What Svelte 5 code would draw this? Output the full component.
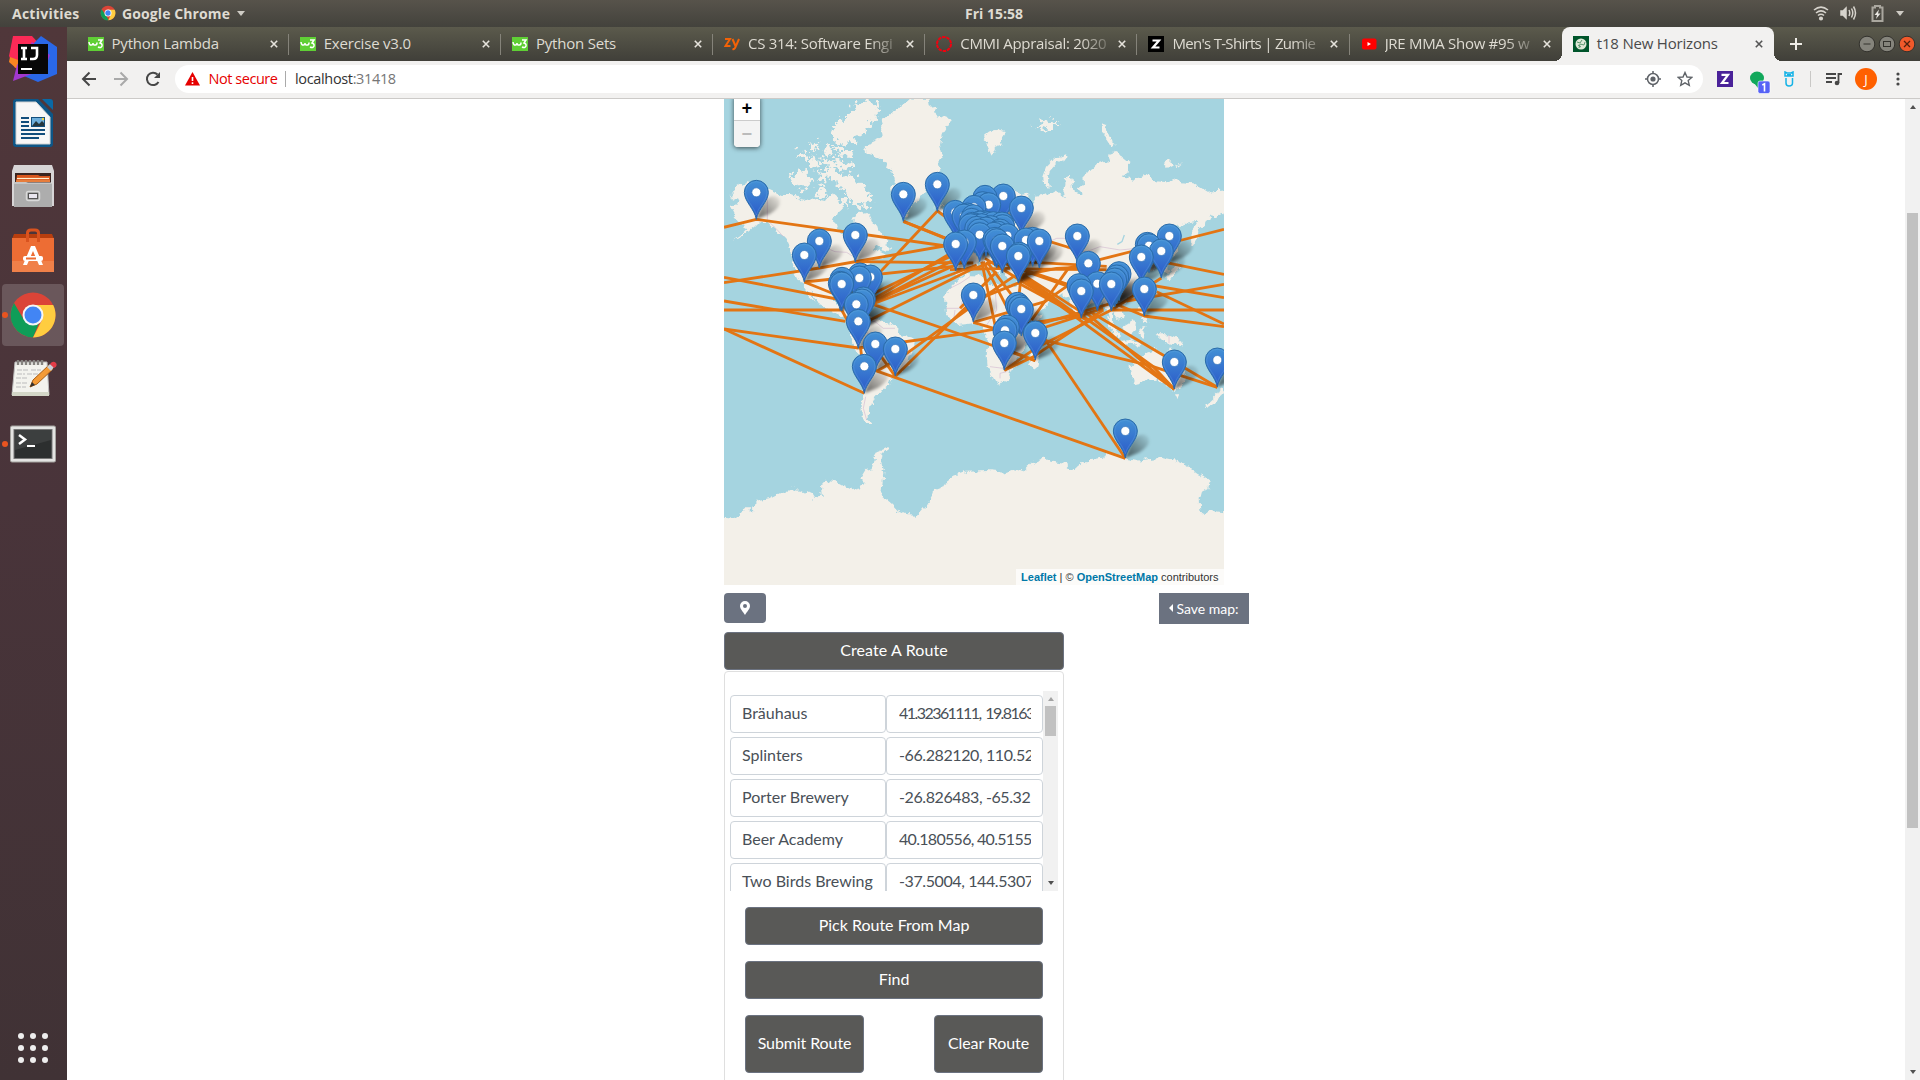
<script>
  const tabs = [
    { icon: 'w3', title: 'Python Lambda' },
    { icon: 'w3', title: 'Exercise v3.0' },
    { icon: 'w3', title: 'Python Sets' },
    { icon: 'zy', title: 'CS 314: Software Engi' },
    { icon: 'ring', title: 'CMMI Appraisal: 2020' },
    { icon: 'zum', title: "Men's T-Shirts | Zumie", tight: true },
    { icon: 'yt', title: 'JRE MMA Show #95 w' },
    { icon: 't18', title: 't18 New Horizons', active: true }
  ];

  const places = [
    ['Bräuhaus', '41.32361111, 19.8163', 'ones'],
    ['Splinters', '-66.282120, 110.52', 'mid'],
    ['Porter Brewery', '-26.826483, -65.32', 'mid'],
    ['Beer Academy', '40.180556, 40.5155', 'snug'],
    ['Two Birds Brewing', '-37.5004, 144.5307', 'mid']
  ];

  // Pin heads, three map units to a pixel; the tip lies 81 units lower.
  const pins = [
    [109, 292], [298, 438], [253, 480], [406, 420], [550, 298], [652, 268],
    [366, 553], [361, 565], [365, 567], [420, 540], [418, 549], [451, 546], [430, 612], [426, 618],
    [409, 628], [415, 679], [466, 747], [526, 762], [433, 814],
    [706, 352], [742, 360], [732, 363], [760, 365], [755, 376], [707, 447], [733, 441],
    [760, 600], [779, 419], [895, 483], [898, 478], [847, 453], [825, 433], [830, 437], [862, 422], [918, 435], [938, 433],
    [958, 438], [904, 339], [850, 303], [795, 307], [788, 326], [806, 329], [762, 337],
    [764, 392], [770, 400], [758, 388], [780, 384], [792, 383], [785, 392], [805, 386], [820, 386], [812, 398],
    [798, 402], [846, 387], [848, 395], [832, 414], [840, 408], [822, 418], [778, 408], [752, 392],
    [1072, 423], [1105, 505], [1077, 572], [1084, 588], [1132, 566], [1174, 567], [1190, 546],
    [1197, 536], [1184, 555], [1264, 486], [1282, 448], [1287, 452], [1324, 468], [1348, 423], [1273, 582],
    [1363, 801], [1492, 795], [892, 628], [898, 635], [904, 642], [862, 696], [855, 706],
    [853, 744], [946, 714], [1216, 1008]
  ].sort((a, b) => a[1] - b[1]);

  const legs = [
    'M12 397L109 373L700 456', 'M12 563L298 519L690 450', 'M12 547L350 612', 'M12 618L376 679', 'M12 645H365',
    'M12 702L415 759', 'M12 702L433 895', 'M253 561L700 514', 'M253 561L365 606', 'M406 500L760 504',
    'M550 379L730 452', 'M550 379L760 462', 'M652 348L430 585', 'M652 348L720 396', 'M440 625L700 470',
    'M440 630L720 485', 'M450 625L740 495', 'M450 630L770 510', 'M430 610L700 480', 'M450 675L750 525L850 490',
    'M450 625L780 738L946 797', 'M415 759L780 710L1084 660', 'M526 844L760 615', 'M526 800L800 602L905 560',
    'M433 815L1216 1090', 'M422 760L426 795', 'M466 760L526 844', 'M470 829L520 800', 'M365 645L390 690',
    'M785 500L825 690', 'M790 500L870 655', 'M800 500L905 640', 'M905 530L895 620', 'M795 490L1084 669', 'M850 500L1084 669',
    'M895 530L1090 655', 'M895 564L1100 675', 'M895 540L1363 883', 'M1084 640L1363 883', 'M1110 650L1492 877',
    'M950 730L1290 812L1492 877', 'M1084 660L1300 815L1363 883', 'M960 710L1216 1090', 'M958 430L1072 465',
    'M900 500L1160 514', 'M880 522L1160 524', 'M1130 496L1264 462', 'M1350 444L1512 403', 'M1324 500L1512 538',
    'M1290 570L1512 608', 'M1220 618L1512 568', 'M1310 590L1512 687', 'M1174 645H1512', 'M1170 620L1273 663L1512 695',
    'M853 826L946 760L1174 645', 'M853 826L940 785L1150 645', 'M760 682L975 620L1060 560', 'M720 655L880 545',
    'M720 640L830 530', 'M760 682L855 710', 'M950 690L1174 625', 'M950 705L1150 640', 'M935 675L1045 520L1110 500',
    'M855 762L946 797', 'M1174 645L1324 549', 'M905 525L1090 590', 'M870 510L1140 600', 'M690 524L870 520', 'M910 540L1010 520L1110 515'
  ];

  const dots = [0, 1, 2, 3, 4, 5, 6, 7, 8];
</script>

<div class="desktop">
  <header class="topbar">
    <span class="act">Activities</span>
    <span class="app">
      <svg width="16" height="16" viewBox="-24 -24 48 48">
        <circle r="22" fill="#db4437" />
        <path d="M-19-11L-5 9L2 22A22 22 0 0 1-19-11" fill="#0f9d58" />
        <path d="M0-10H20A22 22 0 0 1 1 22L9 4" fill="#ffcd40" />
        <circle r="10.500" fill="#fff" /><circle r="8" fill="#4285f4" />
      </svg>
      <b class="chrome-name">Google Chrome</b><i class="caret"></i>
    </span>
    <span class="clock">Fri 15:58</span>
    <span class="tray">
      <svg width="16" height="16" viewBox="0 0 16 16" fill="none" stroke="#d6d3cc" stroke-width="1.6">
        <path d="M1 5Q8-.8 15 5M3 8Q8 3.800 13 8M5 10.500Q8 8 11 10.500" /><circle cx="8" cy="13.500" r="1.300" fill="#d6d3cc" />
      </svg>
      <svg width="17" height="16" viewBox="0 0 17 16" fill="none" stroke="#d6d3cc" stroke-width="1.5">
        <path d="M1 6H3L6 3V13L3 10H1Z" fill="#d6d3cc" /><path d="M9 5Q10.500 8 9 11M11.500 3.500Q14 8 11.500 12.500M13.500 1.500Q17.500 8 13.500 14.500" />
      </svg>
      <svg width="13" height="17" viewBox="0 0 13 17" fill="none" stroke="#aaa79f" stroke-width="2">
        <path d="M4 2.500V1H9V2.500H11.500V16H1.500V2.500Z" /><path d="M8 4.500L3.500 10H6L5 14L9.500 8.500H7Z" fill="#e8e6e1" stroke="none" />
      </svg>
      <i class="caret"></i>
    </span>
  </header>

  <div class="below">
    <nav class="dock">
      <div class="slot">
        <svg width="48" height="48" viewBox="0 0 48 48">
          <path d="M4 1H23L31 10L30 25L6 33L0 21Z" fill="#fc2a57" /><path d="M1 22L12 26L8 34L0 27Z" fill="#f98621" />
          <path d="M32 1L48 12V39L29 47L15 41L25 8Z" fill="#2a68e8" /><path d="M23 7L41 20L36 34L4 46L8 30Z" fill="#a138cf" />
          <rect x="9" y="9" width="30" height="30" fill="#070707" />
          <path d="M12 13H18M15 13V24M12 24H18M22 13H28V20Q28 24 24 24H21" fill="none" stroke="#fff" stroke-width="2.600" />
          <path d="M12 34H23" stroke="#fff" stroke-width="2" />
        </svg>
      </div>
      <div class="slot">
        <svg width="48" height="48" viewBox="0 0 48 48">
          <path d="M4 3Q4 0 7 0H29L44 15V45Q44 48 41 48H7Q4 48 4 45Z" fill="#0d5687" />
          <path d="M33 0H41Q44 0 44 3V11Z" fill="#0a69a5" />
          <path d="M7 3H27L41 18V45H7Z" fill="#f7f7f7" stroke="#d2d2d2" />
          <path d="M12 19H20M12 23H20M12 27H20M12 31H36M12 35H36M12 39H30" stroke="#124e7c" stroke-width="2" />
          <rect x="22.500" y="18.500" width="13" height="9" fill="#6daedb" stroke="#124e7c" /><path d="M23 27L27 22L30 25L33 22L35 24V27Z" fill="#26373e" /><circle cx="34" cy="20" r="1.200" fill="#f5d33c" />
        </svg>
      </div>
      <div class="slot">
        <svg width="48" height="48" viewBox="0 0 48 48">
          <path d="M5 2H43L45 8V43H3V8Z" fill="#d7d5d6" /><rect x="6" y="10" width="36" height="12" fill="#3a2420" />
          <path d="M8 12H29L31 13H41V19H7Z" fill="#d9561c" /><path d="M8 15.500H40" stroke="#fff0cf" stroke-width="1.200" /><path d="M7 18H41" stroke="#f6a45c" stroke-width="1.200" />
          <path d="M5 19H17L19 20H43V44H5Z" fill="#adadad" /><path d="M5 20H43" stroke="#ddd" />
          <rect x="17.500" y="28.500" width="13" height="9" rx="2" fill="#9b9b9b" stroke="#d9d9d9" stroke-width="1.500" /><rect x="19.500" y="30.500" width="9" height="5" fill="#e9e6ef" stroke="#555" />
        </svg>
      </div>
      <div class="slot">
        <svg width="48" height="48" viewBox="0 0 48 48">
          <path d="M5 7H43L45 12H3Z" fill="#b83e0e" /><path d="M3 11H45V45H3Z" fill="#ed6d34" /><path d="M3 34H45V45H3Z" fill="#f08049" />
          <path d="M18.500 15V6Q18.500 3 22 3H26Q29.500 3 29.500 6V15" fill="none" stroke="#d9531f" stroke-width="3" />
          <path d="M22 19H26L34 38H30L24 24L18 38H14Z" fill="#fff" /><rect x="14" y="29" width="20" height="5" rx="2" fill="#fff" /><rect x="17" y="30.500" width="10" height="2" fill="#ed6d34" />
        </svg>
      </div>
      <div class="slot">
        <div class="glow"></div><i class="run"></i>
        <svg width="48" height="48" viewBox="-24 -24 48 48">
          <circle r="22.500" fill="#db4437" />
          <path d="M-19-12L-9 5L6 8L0 22.500A22.500 22.500 0 0 1-19-12" fill="#0f9d58" />
          <path d="M0-10H20.200A22.500 22.500 0 0 1 0 22.500L9 5" fill="#ffcd40" />
          <circle r="10.500" fill="#f6f6f6" /><circle r="8.500" fill="#4285f4" />
        </svg>
      </div>
      <div class="slot">
        <svg width="48" height="48" viewBox="0 0 48 48">
          <path d="M6 7H38L40 40H3Z" fill="#f3f3ee" stroke="#bbb" /><path d="M3 37H40V41H3Z" fill="#d4d7c8" />
          <path d="M9 5V10M13 5V10M17 5V10M21 5V10M25 5V10M29 5V10M33 5V10" stroke="#85837f" stroke-width="2.400" />
          <path d="M8 15H20M22 15H32M8 19H16M18 19H29M7 23H19M7 28H19M7 32H17" stroke="#bbb" stroke-width="1.200" stroke-dasharray="5 1" />
          <path d="M21 32L24 25L40 10L44 14L28 29Z" fill="#f49b36" stroke="#a85d14" /><path d="M21 32L23 27L26 30Z" fill="#333" />
          <path d="M38 12L41 9L45 12L42 16Z" fill="#c9d0d8" /><path d="M41 9Q44 5 47 8Q49 11 45 13Z" fill="#e23c47" />
        </svg>
      </div>
      <div class="slot last">
        <i class="run"></i>
        <svg width="48" height="48" viewBox="0 0 48 48">
          <rect x="1.500" y="6" width="45" height="36" rx="1.500" fill="#e4e4e2" stroke="#a5a4a0" /><rect x="5" y="9.500" width="38" height="29" fill="#2c2f2f" stroke="#777" />
          <path d="M6 10H42V20L6 30Z" fill="#3c3f3f" /><path d="M10 15L16 19.500L10 24" fill="none" stroke="#fff" stroke-width="2.500" /><path d="M18 26H26" stroke="#fff" stroke-width="2" />
        </svg>
      </div>
      <div class="grid">
        {#each dots as d (d)}<i></i>{/each}
      </div>
    </nav>

    <section class="browser">
      <div class="tabs">
        {#each tabs as t, i (i)}
          <div class="tab" class:active={t.active} class:nosep={i >= 6}>
            <svg class="fav" width="16" height="16" viewBox="0 0 16 16">
              {#if t.icon === 'w3'}
                <rect y="1" width="16" height="14" fill="#5fcf35" /><path d="M1 6Q1.500 9.500 3.500 9Q5 9 5 7Q5 9.500 7.500 9Q9 9 9 6.500M10 4H14L12 7Q14.500 7.500 14 10Q13 12.500 10 11" fill="none" stroke="#fff" stroke-width="1.500" />
              {:else if t.icon === 'zy'}
                <path d="M1 3H6L1.500 10H6.500M8.500 3L11.500 10M15 3L11 12Q10.500 13.500 8.500 13" fill="none" stroke="#f26207" stroke-width="2" />
              {:else if t.icon === 'ring'}
                <circle cx="8" cy="8" r="7" fill="none" stroke="#f2000f" stroke-width="2" stroke-dasharray="3.500 .9" />
              {:else if t.icon === 'zum'}
                <rect width="16" height="16" fill="#000" /><path d="M4.500 4.500H11L5 11.500H11.500" fill="none" stroke="#fff" stroke-width="2.200" />
              {:else if t.icon === 'yt'}
                <rect x="1" y="2.500" width="14.500" height="11" rx="2" fill="#f00" /><path d="M6.500 6L10 8L6.500 10Z" fill="#fff" />
              {:else}
                <rect width="16" height="16" fill="#00552b" /><circle cx="8" cy="8" r="5.500" fill="#dfe9d8" /><path d="M4 6L7 7L9 4M6 12L7 8L11 9L12 6M5 9L8 11" stroke="#5d9870" fill="none" />
              {/if}
            </svg>
            <span class="title" class:tight={t.tight} class:fade={i > 2 && i < 7}>{t.title}</span>
            <svg class="x" width="8" height="8" viewBox="0 0 8 8"><path d="M.8.8L7.200 7.200M7.200.8L.8 7.200" /></svg>
          </div>
        {/each}
        <svg class="plus" width="12" height="12" viewBox="0 0 12 12"><path d="M6 0V12M0 6H12" stroke="#eeece6" stroke-width="2" /></svg>
        <div class="wins">
          <svg width="18" height="18" viewBox="0 0 18 18"><circle cx="9" cy="9" r="7.800" fill="#85847c" stroke="#33322d" /><path d="M5.500 9H12.500" stroke="#33322d" /></svg>
          <svg width="18" height="18" viewBox="0 0 18 18"><circle cx="9" cy="9" r="7.800" fill="#85847c" stroke="#33322d" /><rect x="5.500" y="6.500" width="7" height="5" fill="none" stroke="#33322d" /></svg>
          <svg width="18" height="18" viewBox="0 0 18 18"><circle cx="9" cy="9" r="7.800" fill="#f0592a" stroke="#33322d" /><path d="M6 6L12 12M12 6L6 12" stroke="#53200d" stroke-width="1.300" /></svg>
        </div>
      </div>

      <div class="toolbar">
        <svg class="nav" width="16" height="16" viewBox="0 0 16 16" stroke="#474747"><path d="M15 8H2M8.500 1.500L2 8L8.500 14.500" /></svg>
        <svg class="nav" width="16" height="16" viewBox="0 0 16 16" stroke="#a9a9a9"><path d="M1 8H14M7.500 1.500L14 8L7.500 14.500" /></svg>
        <svg class="nav" width="16" height="16" viewBox="0 0 16 16" stroke="#474747"><path d="M13.500 11A6.200 6.200 0 1 1 12.500 3.500" /><path d="M15 1V7H9Z" fill="#474747" stroke="none" /></svg>
        <div class="omni">
          <svg width="15" height="14" viewBox="0 0 15 14"><path d="M7.500 0L15 13.500H0Z" fill="#e60000" /><path d="M7.500 5V9M7.500 10.200V12" stroke="#fff" stroke-width="1.600" /></svg>
          <span class="warn">Not secure</span><i class="bar"></i><span class="url">localhost<em>:31418</em></span>
          <span class="grow"></span>
          <svg width="16" height="16" viewBox="0 0 16 16" fill="none" stroke="#5f6368" stroke-width="1.500"><circle cx="8" cy="8" r="5.500" /><circle cx="8" cy="8" r="2.600" fill="#5f6368" stroke="none" /><path d="M8 0V3M8 13V16M0 8H3M13 8H16" /></svg>
          <svg width="16" height="16" viewBox="0 0 16 16" fill="none" stroke="#5f6368" stroke-width="1.400"><path d="M8 1.500L10 6L14.800 6.400L11.200 9.600L12.300 14.400L8 11.900L3.700 14.400L4.800 9.600L1.200 6.400L6 6Z" /></svg>
        </div>
        <div class="ext">
          <svg class="e1" width="16" height="16" viewBox="0 0 16 16"><rect width="16" height="16" fill="#4a2299" /><path d="M4.500 3.800H11L5 12H11.500" fill="none" stroke="#fff" stroke-width="2.200" /></svg>
          <svg class="e2" width="22" height="24" viewBox="0 0 22 24"><ellipse cx="8" cy="8" rx="7" ry="6.500" fill="#12a85b" /><path d="M5 13L9 18V12Z" fill="#12a85b" /><rect x="9" y="11" width="12" height="12.500" rx="2" fill="#5662f6" stroke="#fff" stroke-width=".6" /><path d="M13.300 15L15.500 13.800V21.500" fill="none" stroke="#fff" stroke-width="1.600" /></svg>
          <svg class="e3" width="10" height="16" viewBox="0 0 10 16" fill="none" stroke="#16b3e6" stroke-width="1.500"><path d="M1 1L3 2H7L9 1V5H1ZM2 7V12Q2 15 5 15Q8.500 15 8.500 12V7" /><path d="M3 4H7" stroke-width="2" /></svg>
          <i class="rule"></i>
          <svg class="e4" width="16" height="14" viewBox="0 0 16 14" fill="none" stroke="#474747" stroke-width="1.800"><path d="M0 2H10M0 6H10M0 10H6M12.500 11V2H16" /><circle cx="11" cy="11" r="2.300" fill="#474747" stroke="none" /></svg>
          <b class="avatar">J</b>
          <svg class="e5" width="4" height="14" viewBox="0 0 4 14" fill="#474747"><circle cx="2" cy="2" r="1.600" /><circle cx="2" cy="7" r="1.600" /><circle cx="2" cy="12" r="1.600" /></svg>
        </div>
      </div>

      <div class="viewport">
        <main class="page">
          <div class="map">
            <svg class="world" width="500" height="486" viewBox="12 12 1500 1458">
              <defs>
                <linearGradient id="pinfill" x1="0" y1="0" x2="0" y2="1"><stop offset="0" stop-color="#4391d5" /><stop offset="1" stop-color="#2a58c9" /></linearGradient>
                <linearGradient id="shade" x1="0" y1="1" x2="1" y2="0"><stop offset="0" stop-color="#000" stop-opacity=".6" /><stop offset="1" stop-color="#000" stop-opacity="0.030" /></linearGradient>
                <filter id="soft" x="-30%" y="-30%" width="160%" height="160%"><feGaussianBlur stdDeviation="5" /></filter>
                <filter id="coast" filterUnits="userSpaceOnUse" x="0" y="0" width="1530" height="1480"><feTurbulence type="fractalNoise" baseFrequency=".045" numOctaves="4" seed="4" /><feDisplacementMap in="SourceGraphic" scale="24" xChannelSelector="R" yChannelSelector="G" /></filter>
                <filter id="fjords" filterUnits="userSpaceOnUse" x="0" y="0" width="1530" height="1480"><feTurbulence type="fractalNoise" baseFrequency=".06" numOctaves="3" seed="9" /><feDisplacementMap in="SourceGraphic" scale="50" xChannelSelector="R" yChannelSelector="G" /></filter>
                <g id="pin">
                  <path d="M0 81C-5 50-36 28-36 0A36 36 0 0 1 36 0C36 28 5 50 0 81Z" fill="url(#pinfill)" stroke="#2b6ca9" stroke-width="3" />
                  <path d="M0 68C-6 44-32 24-32 0A32 32 0 0 1 32 0C32 24 6 44 0 68Z" fill="none" stroke="#6aabe0" stroke-opacity=".45" stroke-width="2" />
                  <circle r="13.500" fill="#fff" stroke="#2d6eb5" stroke-width="2" />
                </g>
                <path id="drop" d="M0 81L18 34Q45-2 68 18Q80 42 40 65Z" fill="url(#shade)" filter="url(#soft)" />
              </defs>
              <rect x="12" y="12" width="1500" height="1458" fill="#a5d4e0" />
              <g filter="url(#coast)" fill="#f3f0e9">
                <path d="M35 300L50 275L80 262L140 280L165 290L185 300L215 300L245 312L270 318L290 312L318 318L335 292L350 305L355 325L368 335L352 350L342 375L350 402L370 420L388 428L398 450L410 430L403 400L400 375L412 350L430 345L447 358L456 378L473 388L480 410L505 435L500 450L470 455L462 465L500 478L485 492L465 488L445 510L432 530L425 555L425 590L418 595L405 575L370 580L345 595L345 625L365 635L390 610L388 640L408 665L445 660L470 668L500 680L525 695L540 715L575 725L590 735L585 760L570 780L563 812L540 835L520 850L505 872L488 886L472 905L455 915L460 930L447 940L447 960L440 972L458 990L437 990L425 965L425 925L430 900L432 860L430 800L418 780L395 740L385 715L398 690L385 670L345 650L300 628L283 600L270 582L287 620L265 600L240 560L225 530L217 500L215 470L205 440L185 418L160 398L140 378L120 378L100 398L65 425L38 437L70 415L85 400L60 385L38 365L48 345L32 333L62 322L40 312Z" />
                <path d="M437 155L450 140L485 125L480 100L490 70L520 50L540 35L565 22L580 8H625L630 35L655 32L638 55L655 60L692 75L680 100L665 120L660 150L668 180L655 200L660 220L640 245L625 260L615 290L600 310L580 325L565 345L555 362L540 350L530 330L520 305L513 280L522 260L518 235L505 215L495 200L475 190L445 180Z" />
                <path d="M485 445L510 455L505 470L482 465ZM640 335L690 332L688 350L655 355ZM410 590L450 600L455 610L425 605Z" />
                <path d="M850 266L885 285L900 300L925 296L925 325L945 318L940 302L965 300L990 290L1020 296L1035 310L1030 285L1035 250L1050 240L1056 265L1062 292L1085 300L1080 280L1092 270L1090 240L1115 225L1130 210L1160 200L1180 168L1210 185L1228 200L1222 235L1205 245L1250 252L1290 235L1300 258L1340 262L1370 250L1388 262L1420 265L1460 290L1530 285V348L1490 365L1470 360L1460 383L1440 400L1435 430L1420 452L1410 440L1412 410L1435 378L1410 380L1385 385L1355 400L1342 430L1380 440L1370 470L1345 500L1350 530L1338 535L1325 505L1300 520L1265 540L1260 575L1245 600L1215 615L1208 640L1212 660L1196 672L1180 650L1178 690L1188 710L1172 690L1162 650L1145 615L1125 610L1095 645L1083 672L1072 678L1058 640L1048 612L1028 600L990 592L965 572L975 598L1000 606L990 622L965 645L935 657L915 625L890 585L905 590L930 650L965 662L948 690L925 712L918 740L915 760L890 790L880 820L868 848L850 862L830 866L818 845L803 815L800 780L805 745L795 720L783 710L790 692L760 685L718 690L698 680L678 655L675 610L690 580L715 555L735 540L787 542L798 560L830 571L870 574L888 572L895 546L860 545L855 520L840 520L838 542L822 520L800 495L815 535L800 525L780 500L760 510L744 530L710 545L706 507L738 507L725 480L765 445L780 440L780 425L800 430L850 420L860 395L820 405L790 415L770 400L765 380L800 330L825 280Z" />
                <path d="M735 465L728 440L722 420L738 412L750 440L760 455ZM700 455L705 432L722 440L715 458ZM792 122L810 108L832 104L856 112L845 128L848 148L825 155L815 182L804 160ZM1035 178L1040 186L1010 205L992 225L984 252L990 276L968 266L967 245L978 215L1000 192ZM1145 85L1158 90L1162 112L1170 132L1190 148L1175 155L1160 132L1145 115ZM1330 205L1345 195L1362 206L1340 212ZM1368 206L1384 210L1375 216ZM930 768L955 760L962 775L950 815L940 822L932 805ZM1158 672L1175 685L1190 705L1200 728L1190 728L1170 700ZM1203 738L1225 736L1265 745L1255 752L1215 747ZM1210 695L1235 680L1248 675L1245 705L1230 718L1215 712ZM1258 700L1285 695L1268 705L1275 728L1260 725ZM1310 718L1345 718L1375 730L1392 752L1368 748L1345 745L1320 730ZM1255 640L1270 640L1285 680L1270 680ZM1338 545L1355 530L1370 505L1378 520L1360 545L1345 555ZM1228 815L1245 800L1268 790L1280 770L1305 762L1325 770L1335 788L1345 775L1350 755L1362 790L1385 815L1398 840L1388 870L1365 888L1345 880L1330 862L1315 850L1285 855L1260 865L1240 868ZM1362 898L1378 898L1370 915ZM1455 930L1475 912L1492 895L1505 870L1515 880L1505 905L1480 925L1465 935Z" />
              </g>
              <path filter="url(#fjords)" fill="#f3f0e9" d="M345 138L335 110L350 80L380 65L400 35L430 20L465 25L483 40L470 65L450 85L435 110L415 128L385 145L360 152ZM210 240L235 222L262 235L280 260L262 280L230 280L215 262ZM330 218L360 235L400 243L425 262L442 290L460 312L440 332L420 340L398 320L380 302L362 278L345 260L320 240ZM295 190L335 198L370 200L402 208L400 218L350 218L310 215ZM225 190L240 165L265 175L255 192ZM260 200L285 180L298 212L275 215ZM310 160L335 150L340 175L320 182ZM268 148L290 140L300 160L275 165ZM345 165L400 165L395 185L360 185ZM290 230L322 240L315 270L290 262ZM290 275L322 282L325 305L290 305ZM355 312L378 312L385 335L362 335ZM940 95L960 90L990 72L1000 88L1020 85L990 105Z" />
              <g filter="url(#coast)"><path d="M0 1266L46 1272L70 1243L98 1243L112 1217L150 1208L176 1195L202 1185L207 1178L253 1187L279 1200L284 1208L308 1205L306 1165L320 1157L356 1163L392 1183L424 1175L434 1160L424 1150L439 1125L455 1120L462 1090L475 1068L505 1056L508 1062L488 1078L484 1100L490 1135L484 1200L516 1227L537 1250L558 1260L591 1262L620 1230L632 1210L640 1187L661 1180L671 1165L702 1142L739 1130L806 1128L852 1133L890 1120L911 1128L935 1103L971 1087L992 1100L1038 1107L1064 1127L1090 1105L1116 1092L1152 1088L1157 1078L1188 1085L1214 1090L1250 1097L1286 1093L1322 1088L1364 1097L1400 1113L1431 1135L1457 1145L1472 1157L1465 1180L1446 1190L1439 1215L1441 1250L1451 1255L1462 1247L1530 1253V1490H0Z" fill="#f3f0e9" /></g>
              <g fill="none" stroke="#d5bdd2" stroke-width="2">
                <path d="M142 285V375L175 408L190 425M270 455H310L345 470L380 472L400 485M440 675L465 680L490 700L525 700M425 700L450 720L460 760M690 580L720 565L750 545M678 640H720L730 610L745 625M700 680L705 645M825 580L830 645L800 690M830 780L860 790L880 750M810 815L850 820L880 800M840 850V835L860 830M925 420L965 450L1010 430L1045 430M1040 460L1100 470L1140 455L1200 465L1250 460M1070 600L1100 580L1140 570M1347 720V745M437 905L430 940L440 975" />
              </g>
              <path d="M1192 448L1206 440L1213 420" fill="none" stroke="#a5d4e0" stroke-width="4" />
              <g fill="none" stroke="#e37513" stroke-width="8.500" stroke-linejoin="round">
                {#each legs as d (d)}<path {d} />{/each}
              </g>
              {#each pins as [x, y], i (i)}<use href="#drop" {x} {y} />{/each}
              {#each pins as [x, y], i (i)}<use href="#pin" {x} {y} />{/each}
            </svg>
            <div class="zoom"><span>+</span><span class="off">−</span></div>
            <div class="attr"><b>Leaflet</b> | © <b>OpenStreetMap</b> contributors</div>
          </div>

          <div class="under">
            <button class="locate" aria-label="Locate"><svg width="10" height="14" viewBox="0 0 10 14"><path d="M5 0A5 5 0 0 1 10 5C10 8 7 10.500 5 14C3 10.500 0 8 0 5A5 5 0 0 1 5 0M5 3A2 2 0 1 0 5 7A2 2 0 1 0 5 3" fill="#fff" fill-rule="evenodd" /></svg></button>
            <button class="save"><i></i>Save map:</button>
          </div>

          <button class="dark create">Create A Route</button>
          <div class="card">
            <div class="list">
              <div class="rows">
                {#each places as [name, pos, fit] (name)}
                  <div class="row"><div class="field"><span>{name}</span></div><div class="field pos {fit}"><span>{pos}</span></div></div>
                {/each}
              </div>
              <div class="sb"><i class="up dim"></i><i class="thumb"></i><i class="down"></i></div>
            </div>
            <div class="acts">
              <button class="dark">Pick Route From Map</button>
              <button class="dark">Find</button>
              <div class="pair"><button class="dark tall sub">Submit Route</button><button class="dark tall clr">Clear Route</button></div>
            </div>
          </div>
        </main>
        <div class="sb main"><i class="up"></i><i class="thumb"></i><i class="down"></i></div>
      </div>
    </section>
  </div>
</div>

<style>
  :global(body) { margin: 0; overflow: hidden; }
  * { box-sizing: border-box; }
  .desktop { width: 1920px; height: 1080px; overflow: hidden; display: flex; flex-direction: column; background: #fff; font-family: "Open Sans", "Noto Sans", sans-serif; }
  svg { display: block; flex: none; }
  .topbar { height: 27px; flex: none; background: linear-gradient(#57534b, #43423c); display: grid; grid-template-columns: 88px 865px auto 1fr; align-items: center; padding: 0 16px 1px 12px; color: #dfdbd2; font-weight: 700; font-size: 14px; }
  .act { letter-spacing: .25px; }
  .app { display: flex; align-items: center; }
  .chrome-name { font-weight: 700; margin-left: 6px; letter-spacing: .1px; }
  .caret { border: 4.500px solid transparent; border-top: 5px solid #cfccc5; border-bottom: 0; margin-left: 7px; }
  .clock { letter-spacing: 0; }
  .tray { display: flex; align-items: center; justify-content: flex-end; gap: 11px; }
  .tray svg:nth-child(3) { margin-left: 3px; }
  .tray .caret { margin-left: 1px; }
  .below { display: flex; height: 1053px; }
  .dock { width: 67px; flex: none; background: linear-gradient(#50373a, #49343a 45%, #403235); display: flex; flex-direction: column; align-items: center; padding-right: 1px; }
  .slot { width: 66px; height: 64px; display: flex; align-items: center; justify-content: center; position: relative; flex: none; }
  .last { margin-top: 1px; }
  .slot svg { position: relative; }
  .glow { position: absolute; inset: 1px 2px 1px; border-radius: 4px; background: #ffffff2b; }
  .run { position: absolute; left: 2px; top: 29px; width: 6px; height: 6px; border-radius: 50%; background: #e95420; }
  .grid { margin-top: auto; margin-bottom: 17px; display: grid; grid-template-columns: repeat(3, 6px); gap: 6px; }
  .grid i { width: 6px; height: 6px; border-radius: 50%; background: #eee; }
  .browser { flex: 1; display: flex; flex-direction: column; }
  .tabs { height: 34px; flex: none; display: flex; align-items: center; padding-left: 9.500px; background: linear-gradient(#5b5a4c, #403f39); }
  .tab { width: 212.200px; height: 34px; display: flex; align-items: center; padding-left: 11px; color: #dedbd2; font-size: 15px; position: relative; }
  .tab::after { content: ""; width: 1px; height: 21px; background: #85837a; position: absolute; right: 0; top: 7px; }
  .tab.nosep::after { display: none; }
  .tab.active { background: #f2f1f0; color: #4a4a4a; border-radius: 8px 8px 0 0; }
  .tab.active::before { content: ""; position: absolute; left: -8px; right: -8px; bottom: 0; height: 8px; background: radial-gradient(circle at 0 0, transparent 8px, #f2f1f0 8px) left / 8px 8px no-repeat, radial-gradient(circle at 100% 0, transparent 8px, #f2f1f0 8px) right / 8px 8px no-repeat; }
  .title { width: 150px; margin-left: 8px; padding-bottom: 2px; white-space: nowrap; letter-spacing: -.2px; }
  .title.fade { mask-image: linear-gradient(90deg, #000 80%, #0003); letter-spacing: -.3px; }
  .title.tight { letter-spacing: -.7px; }
  .x { margin-left: 8px; fill: none; stroke: #e6e3dc; stroke-width: 1.600; }
  .active .x { stroke: #555; }
  .plus { margin-left: 16px; }
  .wins { margin-left: auto; margin-right: 4px; display: flex; gap: 2px; }
  .toolbar { height: 38px; flex: none; background: #f2f1f0; border-bottom: 1px solid #cccac8; display: flex; align-items: center; padding: 0 0 1px 14px; }
  .nav { fill: none; stroke-width: 2; margin-right: 16px; }
  .omni { width: 1528px; height: 28px; margin-left: -2px; border-radius: 14px; background: #fff; display: flex; align-items: center; padding: 0 10px; font-size: 14.500px; color: #333; }
  .warn { color: #e60000; margin-left: 8.500px; letter-spacing: -.45px; padding-bottom: 2px; }
  .bar { width: 1px; height: 16px; background: #aaa; margin: 0 9px 0 7.500px; }
  .url { letter-spacing: -.35px; padding-bottom: 2px; }
  .url em { font-style: normal; color: #767676; }
  .grow { flex: 1; }
  .omni svg:last-child { margin-left: 16px; }
  .ext { display: flex; align-items: center; }
  .e1 { margin-left: 14px; }
  .e2 { margin: 5px 0 0 16px; }
  .e3 { margin-left: 13px; }
  .rule { width: 1px; height: 16px; background: #c9c8c6; margin: 0 15px 0 16px; }
  .avatar { width: 22px; height: 22px; border-radius: 50%; background: #ff6000; color: #fff; font-weight: 400; font-size: 13px; line-height: 22px; text-align: center; margin: 0 19px 0 13px; }
  .viewport { flex: 1; display: flex; height: 981px; overflow: hidden; background: #fff; }
  .page { flex: 1; padding-left: 657px; color: #495057; font: 16px Lato, sans-serif; }
  .map { width: 500px; height: 486px; position: relative; overflow: hidden; }
  .zoom { position: absolute; left: 10px; top: -4px; width: 26px; height: 52px; border-radius: 4px; overflow: hidden; background: #fff; box-shadow: 0 1px 5px #000000a6; font: bold 18px/28px "Liberation Mono", monospace; text-align: center; color: #000; }
  .zoom span { display: block; height: 26px; border-bottom: 1px solid #ccc; }
  .zoom .off { background: #f4f4f4; color: #bbb; border: 0; }
  .attr { position: absolute; right: 0; bottom: 0; height: 16px; padding: 0 5.500px 0 5px; background: #ffffffb8; font: 11px/16px "Liberation Sans", Arial, sans-serif; color: #333; white-space: nowrap; }
  .attr b { color: #0078a8; }
  .under { display: flex; justify-content: space-between; width: 525px; height: 31px; margin: 8px 0; }
  button { border: 0; padding: 0; margin: 0; color: #fff; font: 16px Lato, sans-serif; display: flex; align-items: center; justify-content: center; }
  .locate { width: 42px; height: 30px; border-radius: 4px; background: #6b7280; }
  .save { width: 90px; height: 31px; background: #6b7280; font-size: 14px; padding-bottom: 1px; }
  .save i { border: 4px solid transparent; border-right-color: #fff; border-left: 0; margin-right: 3px; }
  .dark { background: #595957; border: 1px solid #6b7280; border-radius: 4px; height: 38px; width: 100%; padding-bottom: 3px; letter-spacing: 0; }
  .create { width: 340px; letter-spacing: .1px; }
  .card { width: 340px; height: 420px; margin-top: 1px; border: 1px solid #dfdfdf; border-radius: 4px; padding: 19px 5px 0; }
  .list { display: flex; height: 200px; overflow: hidden; }
  .rows { width: 313px; padding-top: 4px; flex: none; }
  .row { display: flex; margin-bottom: 4px; }
  .field { width: 156px; height: 38px; border: 1px solid #ced4da; border-radius: 4px; padding: 0 11px 2px; display: flex; align-items: center; }
  .field.pos { width: 157px; padding-left: 12px; }
  .field span { white-space: nowrap; flex: 1; line-height: 24px; }
  .pos span { overflow: hidden; }
  .ones span { letter-spacing: -1.550px; word-spacing: 2px; }
  .mid span { letter-spacing: -.4px; }
  .snug span { letter-spacing: -.7px; }
  .sb { width: 15px; background: #f1f1f1; display: flex; flex-direction: column; align-items: center; padding: 6px 0; flex: none; }
  .sb i { border: 3.500px solid transparent; }
  .sb .up { border-bottom: 4px solid #505050; border-top: 0; }
  .sb .dim { border-bottom-color: #a3a3a3; }
  .sb .down { border-top: 4px solid #505050; border-bottom: 0; margin-top: auto; }
  .sb .thumb { border: 0; width: 11px; height: 30px; background: #c1c1c1; margin-top: 5px; }
  .main .thumb { height: 615px; margin-top: 104px; }
  .acts { padding: 16px 15px 0; display: flex; flex-direction: column; gap: 16px; }
  .pair { display: flex; justify-content: space-between; }
  .tall { height: 58px; }
  .sub { width: 119px; letter-spacing: -.1px; }
  .clr { width: 109px; letter-spacing: -.1px; }
</style>
